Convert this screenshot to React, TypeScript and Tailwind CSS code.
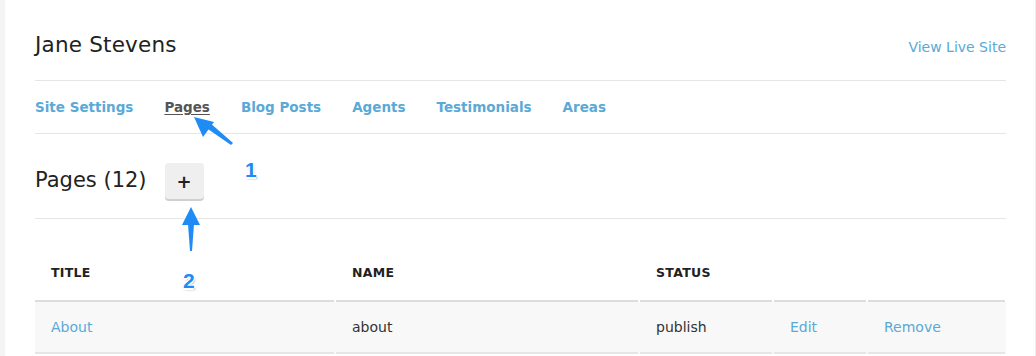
import React from "react";

// 페이지 관리 화면 + 안내 주석(화살표/번호) 오버레이
const FONT = { fontFamily: '"DejaVu Sans", "Liberation Sans", sans-serif' };

const navItems = [
  { label: "Site Settings", active: false },
  { label: "Pages", active: true },
  { label: "Blog Posts", active: false },
  { label: "Agents", active: false },
  { label: "Testimonials", active: false },
  { label: "Areas", active: false },
];

const columns = ["TITLE", "NAME", "STATUS", "", ""];
const gridCols = "grid grid-cols-[299px_302px_132px_92px_137px] gap-x-[2px]";

function Marker({ n, className }: { n: string; className: string }) {
  return (
    <span
      className={`absolute text-[21px] font-bold leading-none text-[#1f8cf5] ${className}`}
      style={{
        fontFamily: '"Liberation Sans", sans-serif',
        textShadow:
          "-1.5px 0 #fff, 1.5px 0 #fff, 0 -1.5px #fff, 0 1.5px #fff, 1px 2px 2px rgba(0,0,0,0.35)",
      }}
    >
      {n}
    </span>
  );
}

export default function App() {
  return (
    <div
      className="relative flex h-[356px] w-[1036px] overflow-hidden bg-white text-[#333]"
      style={FONT}
    >
      <div className="w-[5px] shrink-0 bg-[#f4f4f4]" />

      <main className="flex-1 border-r border-[#eeeeee] pl-[30px] pr-[29px]">
        {/* 상단: 이름 + 라이브 사이트 링크 */}
        <header className="flex h-[81px] items-baseline justify-between border-b border-[#e6e6e6] pt-[29px]">
          <h1 className="text-[21.5px] font-normal tracking-[0.2px] text-[#222]">Jane Stevens</h1>
          <a className="text-[14px] text-[#5aa9d6]">View Live Site</a>
        </header>

        {/* 탭 */}
        <nav className="flex h-[53px] items-center gap-[31px] border-b border-[#e6e6e6]">
          {navItems.map((item) => (
            <a
              key={item.label}
              className={`text-[13.5px] font-bold ${
                item.active ? "text-[#555] underline underline-offset-2" : "text-[#5aa9d6]"
              }`}
            >
              {item.label}
            </a>
          ))}
        </nav>

        {/* 섹션 제목 + 추가 버튼 */}
        <div className="flex h-[85px] items-center gap-[18px] border-b border-[#e6e6e6] pt-[10px]">
          <h2 className="text-[21px] font-normal text-[#222]">Pages (12)</h2>
          <button
            type="button"
            className="flex h-[36px] w-[39px] items-center justify-center rounded-[4px] bg-[#efefef] text-[18px] font-bold text-[#222] shadow-[0_2px_0_#cfcfcf]"
          >
            +
          </button>
        </div>

        {/* 표 */}
        <div className={`${gridCols} h-[83px] items-end`}>
          {columns.map((col, i) => (
            <div
              key={i}
              className="border-b-2 border-[#dddddd] px-4 pb-[17px] text-[12.5px] font-bold tracking-[0.3px] text-[#222]"
            >
              {col || "\u00a0"}
            </div>
          ))}
        </div>
        <div className={`${gridCols} h-[52px] bg-[#f8f8f8] text-[14px]`}>
          {[
            { text: "About", link: true },
            { text: "about", link: false },
            { text: "publish", link: false },
            { text: "Edit", link: true },
            { text: "Remove", link: true },
          ].map((cell) => (
            <div
              key={cell.text}
              className={`flex items-center border-b-2 border-[#e6e6e6] px-4 ${
                cell.link ? "text-[#5aa9d6]" : "text-[#333]"
              }`}
            >
              {cell.text}
            </div>
          ))}
        </div>
      </main>

      {/* 주석 화살표 1: Pages 탭, 2: + 버튼 */}
      <svg className="absolute left-0 top-0" width="1036" height="356" aria-hidden="true">
        <path d="M231 145 L205 127 L209 122 L233 143 Z" fill="#1f8cf5" />
        <path d="M194 117 L214 122 L203 137 Z" fill="#1f8cf5" />
        <path d="M191 207 L200 225 L182 225 Z" fill="#1f8cf5" />
        <path d="M188 224 L194 224 L192 251 L190 251 Z" fill="#1f8cf5" />
      </svg>
      <Marker n="1" className="left-[245px] top-[159px]" />
      <Marker n="2" className="left-[183px] top-[270px]" />
    </div>
  );
}
